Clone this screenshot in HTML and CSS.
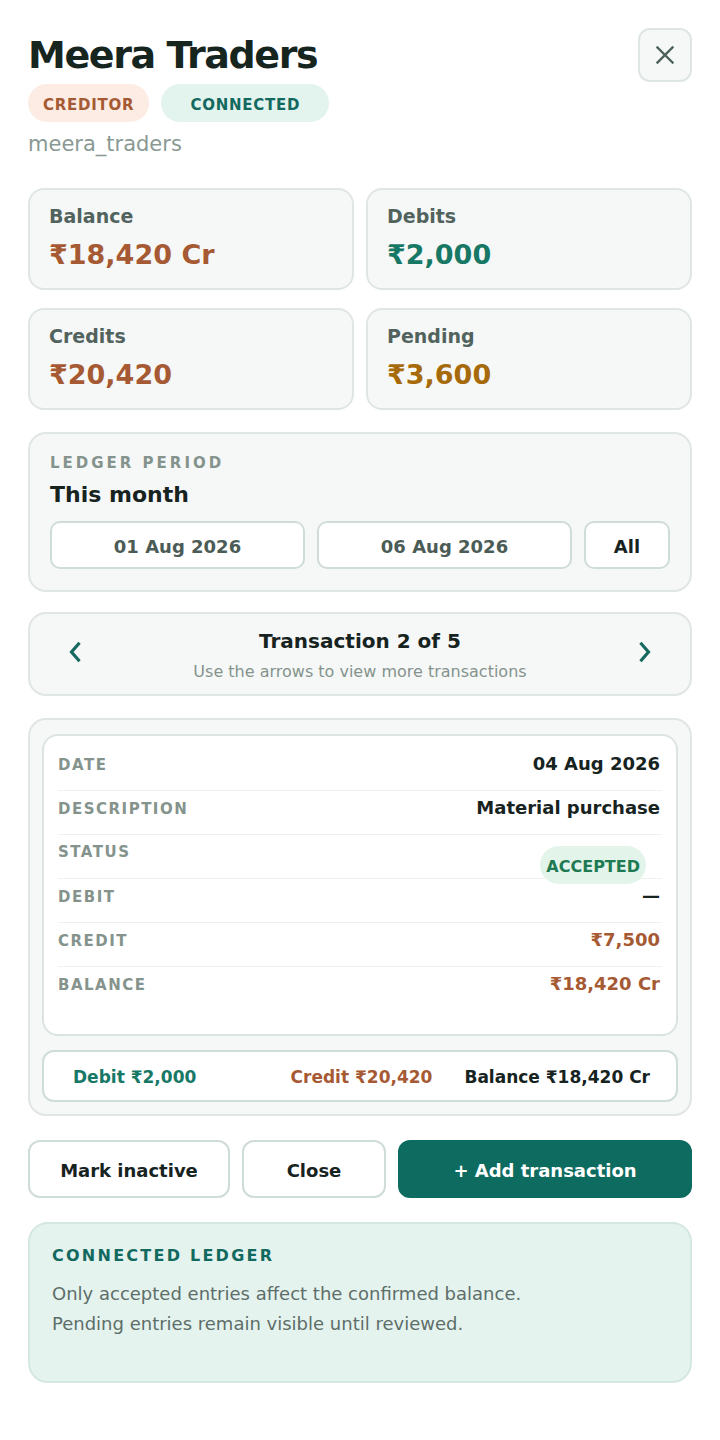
FILE: index.html
```html
<!DOCTYPE html>
<html lang="en">
<head>
<meta charset="utf-8">
<title>Meera Traders</title>
<link rel="stylesheet" href="styles.css">
</head>
<body>
<main class="sheet">
  <header class="head">
    <div class="head-main">
      <h1 class="title">Meera Traders</h1>
      <div class="badges">
        <span class="badge badge-creditor">CREDITOR</span>
        <span class="badge badge-connected">CONNECTED</span>
      </div>
      <div class="handle">meera_traders</div>
    </div>
    <button class="close-btn" aria-label="Close">
      <svg width="20" height="20" viewBox="0 0 20 20" fill="none" stroke="#4c625b" stroke-width="2.4" stroke-linecap="square"><path d="M2.5 2.5 L17.5 17.5 M17.5 2.5 L2.5 17.5"/></svg>
    </button>
  </header>

  <section class="stats">
    <div class="stat"><div class="stat-label">Balance</div><div class="stat-value v-brown">₹18,420 Cr</div></div>
    <div class="stat"><div class="stat-label">Debits</div><div class="stat-value v-teal">₹2,000</div></div>
    <div class="stat"><div class="stat-label">Credits</div><div class="stat-value v-brown">₹20,420</div></div>
    <div class="stat"><div class="stat-label">Pending</div><div class="stat-value v-amber">₹3,600</div></div>
  </section>

  <section class="card period">
    <div class="eyebrow">LEDGER PERIOD</div>
    <div class="period-name">This month</div>
    <div class="period-controls">
      <button class="pill-btn muted">01 Aug 2026</button>
      <button class="pill-btn muted">06 Aug 2026</button>
      <button class="pill-btn">All</button>
    </div>
  </section>

  <section class="card nav">
    <button class="arrow" aria-label="Previous">
      <svg width="14" height="22" viewBox="0 0 14 22" fill="none" stroke="#16695e" stroke-width="3.2" stroke-linecap="square" stroke-linejoin="miter"><path d="M10.5 3 L3.5 11 L10.5 19"/></svg>
    </button>
    <div class="nav-text">
      <div class="nav-title">Transaction 2 of 5</div>
      <div class="nav-sub">Use the arrows to view more transactions</div>
    </div>
    <button class="arrow" aria-label="Next">
      <svg width="14" height="22" viewBox="0 0 14 22" fill="none" stroke="#16695e" stroke-width="3.2" stroke-linecap="square" stroke-linejoin="miter"><path d="M3.5 3 L10.5 11 L3.5 19"/></svg>
    </button>
  </section>

  <section class="card txn">
    <div class="txn-detail">
      <div class="row"><span class="row-label">DATE</span><span class="row-value">04 Aug 2026</span></div>
      <div class="row"><span class="row-label">DESCRIPTION</span><span class="row-value">Material purchase</span></div>
      <div class="row row-status"><span class="row-label">STATUS</span><span class="status-pill">ACCEPTED</span></div>
      <div class="row"><span class="row-label">DEBIT</span><span class="row-value">—</span></div>
      <div class="row"><span class="row-label">CREDIT</span><span class="row-value is-brown">₹7,500</span></div>
      <div class="row"><span class="row-label">BALANCE</span><span class="row-value is-brown">₹18,420 Cr</span></div>
    </div>
    <div class="totals">
      <span class="t-debit">Debit ₹2,000</span>
      <span class="t-credit">Credit ₹20,420</span>
      <span class="t-balance">Balance ₹18,420 Cr</span>
    </div>
  </section>

  <section class="actions">
    <button class="act">Mark inactive</button>
    <button class="act">Close</button>
    <button class="act act-primary">+ Add transaction</button>
  </section>

  <section class="info">
    <div class="info-title">CONNECTED LEDGER</div>
    <p class="info-text">Only accepted entries affect the confirmed balance.<br>Pending entries remain visible until reviewed.</p>
  </section>
</main>
</body>
</html>
```

FILE: styles.css
```css
* { box-sizing: border-box; }

html, body {
  margin: 0;
  padding: 0;
  background: #ffffff;
}

body {
  font-family: "DejaVu Sans", "Liberation Sans", sans-serif;
  color: #17231f;
}

button {
  font-family: inherit;
  cursor: pointer;
}

.sheet {
  width: 720px;
  padding: 28px 28px 40px;
}

/* header */
.head {
  display: flex;
  justify-content: space-between;
  align-items: flex-start;
}

.title {
  margin: 5px 0 0;
  font-size: 38px;
  line-height: 44px;
  font-weight: 700;
  letter-spacing: -1.4px;
  color: #17251f;
}

.badges {
  display: flex;
  gap: 12px;
  margin-top: 7px;
}

.badge {
  height: 38px;
  padding-top: 4px;
  line-height: 34px;
  border-radius: 19px;
  font-size: 15px;
  font-weight: 700;
  letter-spacing: 0.75px;
}

.badge-creditor {
  padding-left: 15px;
  padding-right: 15px;
  background: #fcece3;
  color: #a65a34;
}

.badge-connected {
  padding-left: 29px;
  padding-right: 29px;
  background: #e3f3ee;
  color: #12695e;
}

.handle {
  margin-top: 8px;
  font-size: 21px;
  line-height: 28px;
  color: #8a9993;
}

.close-btn {
  width: 54px;
  height: 54px;
  border: 2px solid #dee6e3;
  border-radius: 12px;
  background: #f5f8f7;
  display: flex;
  align-items: center;
  justify-content: center;
  padding: 0;
}

/* stats */
.stats {
  margin-top: 30px;
  display: grid;
  grid-template-columns: 1fr 1fr;
  column-gap: 12px;
  row-gap: 18px;
}

.stat {
  height: 102px;
  border: 2px solid #dfe6e3;
  border-radius: 16px;
  background: #f6f8f7;
  padding: 14px 19px 0;
}

.stat-label {
  font-size: 19px;
  line-height: 24px;
  font-weight: 700;
  color: #52635e;
}

.stat-value {
  margin-top: 10px;
  font-size: 27px;
  line-height: 34px;
  font-weight: 700;
}

.v-brown { color: #a65a34; }
.v-teal { color: #177866; }
.v-amber { color: #a76a0b; }

/* generic card */
.card {
  border: 2px solid #dfe6e3;
  border-radius: 18px;
  background: #f6f8f7;
}

/* period */
.period {
  margin-top: 22px;
  padding: 19px 20px 21px;
}

.eyebrow {
  font-size: 15px;
  line-height: 20px;
  font-weight: 700;
  letter-spacing: 3px;
  color: #85938d;
}

.period-name {
  margin-top: 8px;
  font-size: 22px;
  line-height: 28px;
  font-weight: 700;
  color: #17231f;
}

.period-controls {
  margin-top: 12px;
  display: grid;
  grid-template-columns: 1fr 1fr 86px;
  gap: 12px;
}

.pill-btn {
  height: 48px;
  border: 2px solid #cfdcd8;
  border-radius: 10px;
  background: #ffffff;
  font-size: 18px;
  font-weight: 700;
  color: #17231f;
  padding: 2px 0 0;
}

.pill-btn.muted { color: #4b5b56; }

/* navigator */
.nav {
  margin-top: 20px;
  display: flex;
  align-items: center;
  padding: 14px 25px 12px;
}

.arrow {
  width: 40px;
  height: 40px;
  margin-bottom: 6px;
  border: none;
  background: transparent;
  padding: 0;
  display: flex;
  align-items: center;
  justify-content: center;
}

.nav-text {
  flex: 1;
  text-align: center;
}

.nav-title {
  font-size: 20px;
  line-height: 26px;
  font-weight: 700;
  color: #17231f;
}

.nav-sub {
  margin-top: 8px;
  font-size: 16px;
  line-height: 20px;
  color: #85938d;
}

/* transaction */
.txn {
  margin-top: 22px;
  padding: 14px 12px 12px;
}

.txn-detail {
  background: #ffffff;
  border: 2px solid #dbe4e0;
  border-radius: 16px;
  padding: 11px 14px 24px;
}

.row {
  display: flex;
  justify-content: space-between;
  align-items: baseline;
  height: 44px;
  padding: 5px 2px 0 0;
  border-bottom: 1px solid #edf1ef;
}

.row:last-child {
  height: 43px;
  border-bottom: none;
}

.row-label {
  font-size: 15px;
  line-height: 24px;
  font-weight: 700;
  letter-spacing: 1.5px;
  color: #85938d;
}

.row-value {
  font-size: 18px;
  line-height: 24px;
  font-weight: 700;
  color: #17231f;
}

.row-value.is-brown { color: #a65a34; }

.row-status {
  align-items: flex-start;
}

.status-pill {
  margin-top: 6px;
  margin-right: 14px;
  margin-bottom: -20px;
  height: 38px;
  padding: 3px 6px 0;
  line-height: 35px;
  border-radius: 19px;
  background: #e3f4eb;
  color: #1e7a52;
  font-size: 16px;
  font-weight: 700;
}

.totals {
  margin-top: 14px;
  height: 52px;
  background: #ffffff;
  border: 2px solid #cfdcd8;
  border-radius: 12px;
  display: grid;
  grid-template-columns: 1fr auto 1fr;
  align-items: center;
  padding: 1px 26px 0 29px;
  font-size: 17px;
  font-weight: 700;
}

.t-debit { color: #177866; text-align: left; }
.t-credit { color: #a65a34; text-align: center; }
.t-balance { color: #17231f; text-align: right; }

/* actions */
.actions {
  margin-top: 24px;
  display: grid;
  grid-template-columns: 202px 144px 1fr;
  gap: 12px;
}

.act {
  height: 58px;
  border: 2px solid #cfdcd8;
  border-radius: 12px;
  background: #ffffff;
  font-size: 18px;
  font-weight: 700;
  color: #17231f;
  padding: 3px 0 0;
}

.act-primary {
  background: #0e6b60;
  border-color: #0e6b60;
  color: #ffffff;
}

/* info */
.info {
  margin-top: 24px;
  background: #e5f3ef;
  border: 2px solid #d5e7e1;
  border-radius: 20px;
  padding: 21px 22px 42px;
}

.info-title {
  font-size: 16px;
  line-height: 22px;
  font-weight: 700;
  letter-spacing: 2.25px;
  color: #12695e;
}

.info-text {
  margin: 12px 0 0;
  font-size: 18px;
  line-height: 30px;
  color: #5d6e69;
}
```
